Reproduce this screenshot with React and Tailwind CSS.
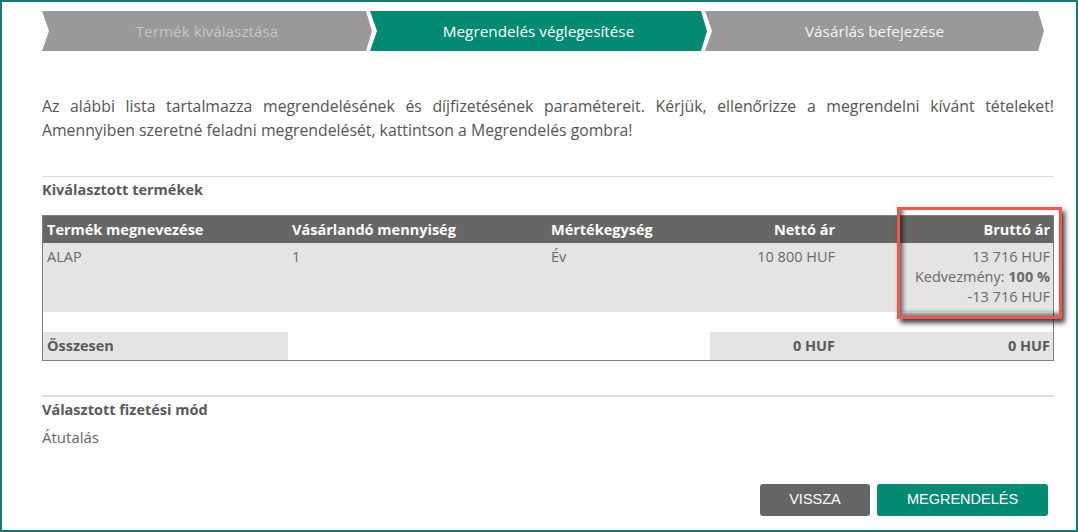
const steps = [
  { label: "Termék kiválasztása", state: "done", width: "w-[330px]" },
  { label: "Megrendelés véglegesítése", state: "active", width: "w-[337px]" },
  { label: "Vásárlás befejezése", state: "todo", width: "flex-1" },
];

function Stepper() {
  return (
    <div className="flex h-10 mr-[10px]">
      {steps.map((step, i) => (
        <div
          key={i}
          className={
            step.width +
            " shrink-0 flex items-center justify-center text-[15.3px] [clip-path:polygon(0_0,calc(100%-6px)_0,100%_50%,calc(100%-6px)_100%,0_100%,7px_50%)] " +
            (i > 0 ? "-ml-[2px] " : "") +
            (step.state === "active"
              ? "bg-[#028a72] text-white"
              : step.state === "done"
              ? "bg-[#999999] text-[#c6c6c6]"
              : "bg-[#999999] text-[#f4f4f4]")
          }
        >
          {step.label}
        </div>
      ))}
    </div>
  );
}

export default function App() {
  return (
    <div
      className="h-[532px] w-[1078px] border-2 border-[#0e7c7b] bg-white pt-[9px] pl-[40px] pr-[22px] text-[#666]"
      style={{ fontFamily: '"Open Sans", "Liberation Sans", sans-serif' }}
    >
      <Stepper />

      <p className="mt-[43px] text-[15.8px] leading-6 text-justify text-[#555]">
        Az alábbi lista tartalmazza megrendelésének és díjfizetésének paramétereit. Kérjük, ellenőrizze a megrendelni kívánt tételeket! Amennyiben szeretné feladni megrendelését, kattintson a Megrendelés gombra!
      </p>

      <div className="mt-[34px] border-t border-[#dcdcdc]" />
      <h4 className="mt-[3px] text-[14.5px] leading-5 font-bold text-[#5a5a5a]">
        Kiválasztott termékek
      </h4>

      <div className="relative mt-[15px]">
        <div className="border border-[#808080] text-[14.5px]">
          <div className="grid grid-cols-[245px_259px_163px_129px_214px] bg-[#666666] text-white font-bold h-[27px] items-center">
            <div className="pl-[4px]">Termék megnevezése</div>
            <div className="pl-[4px]">Vásárlandó mennyiség</div>
            <div className="pl-[4px]">Mértékegység</div>
            <div className="pr-[4px] text-right">Nettó ár</div>
            <div className="pr-[3px] text-right">Bruttó ár</div>
          </div>
          <div className="grid grid-cols-[245px_259px_163px_129px_214px] bg-[#e4e4e4] h-[69px] leading-5 pt-[4px] text-[#6a6a6a]">
            <div className="pl-[4px]">ALAP</div>
            <div className="pl-[4px]">1</div>
            <div className="pl-[4px]">Év</div>
            <div className="pr-[4px] text-right">10 800 HUF</div>
            <div className="pr-[3px] text-right">
              <div>13 716 HUF</div>
              <div>
                Kedvezmény: <span className="font-bold">100 %</span>
              </div>
              <div>-13 716 HUF</div>
            </div>
          </div>
          <div className="h-[20px]" />
          <div className="grid grid-cols-[245px_259px_163px_129px_214px] h-[28px] items-center font-bold text-[#5a5a5a]">
            <div className="pl-[4px] bg-[#e4e4e4] h-full flex items-center">Összesen</div>
            <div className="col-span-2" />
            <div className="pr-[4px] bg-[#e4e4e4] h-full flex items-center justify-end">0 HUF</div>
            <div className="pr-[3px] bg-[#e4e4e4] h-full flex items-center justify-end">0 HUF</div>
          </div>
        </div>

        {/* highlight annotation around the gross price column */}
        <div className="absolute left-[855px] -top-[8px] w-[165px] h-[112px] border-[3.5px] border-[#f5564c] shadow-[3px_4px_5px_rgba(0,0,0,0.75),inset_3px_-3px_4px_rgba(0,0,0,0.55)] pointer-events-none" />
      </div>

      <div className="mt-[34px] border-t-2 border-[#dcdcdc]" />
      <h4 className="mt-[3px] text-[14.5px] leading-5 font-bold text-[#5a5a5a]">
        Választott fizetési mód
      </h4>
      <p className="mt-[7px] text-[15px] leading-5 text-[#666]">Átutalás</p>

      <div className="mt-[37px] mr-[6px] flex justify-end gap-[7px] text-[14.5px] text-white" style={{ fontFamily: '"Liberation Sans", Arial, sans-serif' }}>
        <button className="h-8 w-[110px] rounded-[3px] bg-[#666666]">VISSZA</button>
        <button className="h-8 w-[171px] rounded-[3px] bg-[#028a72]">MEGRENDELÉS</button>
      </div>
    </div>
  );
}
